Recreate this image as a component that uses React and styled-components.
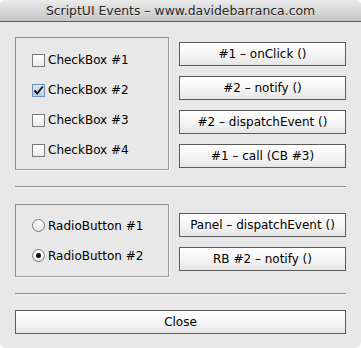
import React from "react";
import styled, { createGlobalStyle } from "styled-components";

const GlobalStyle = createGlobalStyle`
  html, body {
    margin: 0;
    padding: 0;
    background: #ffffff;
  }
  * {
    box-sizing: border-box;
  }
`;

const Window = styled.div`
  width: 361px;
  height: 348px;
  background: #e8e8e8;
  border-radius: 5px 5px 6px 6px;
  overflow: hidden;
  display: flex;
  flex-direction: column;
  font-family: "DejaVu Sans", "Liberation Sans", sans-serif;
  font-size: 12px;
  color: #000;
`;

const TitleBar = styled.div`
  height: 22px;
  flex-shrink: 0;
  background: linear-gradient(#ebebeb, #c4c4c4);
  border-bottom: 1px solid #575757;
  display: flex;
  align-items: center;
  justify-content: center;
  font-size: 12.4px;
  color: #262626;
  text-shadow: 0 1px 0 rgba(255, 255, 255, 0.5);
`;

const Content = styled.div`
  flex: 1;
  display: flex;
  flex-direction: column;
  padding: 15px 15px 0 15px;
`;

const Section = styled.div`
  display: flex;
  gap: 10px;
`;

const Panel = styled.div`
  width: 155px;
  height: ${(p) => p.h}px;
  border: 1px solid #8c8c8c;
  border-bottom-color: #9a9a9a;
  border-right-color: #9a9a9a;
  box-shadow: 1px 1px 0 #f6f6f6;
  display: flex;
  flex-direction: column;
  justify-content: center;
  gap: 16px;
  padding: ${(p) => p.pt || 0}px 0 0 16px;
`;

const ButtonColumn = styled.div`
  display: flex;
  flex-direction: column;
  gap: ${(p) => p.gap}px;
  padding-top: ${(p) => p.top}px;
`;

const Button = styled.div`
  width: ${(p) => p.w || 167}px;
  height: 24px;
  border: 1px solid #5a5a5a;
  background: linear-gradient(#ffffff, #f7f7f7 45%, #e6e6e6);
  display: flex;
  align-items: center;
  justify-content: center;
  color: #000;
`;

const Separator = styled.div`
  height: 1px;
  width: 331px;
  background: #8a8a8a;
  box-shadow: 0 1px 0 #f4f4f4;
  margin: ${(p) => p.m};
`;

const Option = styled.label`
  display: flex;
  align-items: center;
  gap: 3px;
  height: 14px;
`;

const Box = styled.span`
  width: 13px;
  height: 13px;
  flex-shrink: 0;
  border: 1px solid ${(p) => (p.checked ? "#6e8fb8" : "#7a7a7a")};
  background: ${(p) =>
    p.checked
      ? "linear-gradient(#dbe7f5, #b9cde6)"
      : "linear-gradient(#ffffff, #ececec)"};
  display: flex;
  align-items: center;
  justify-content: center;
`;

const Radio = styled.span`
  width: 13px;
  height: 13px;
  flex-shrink: 0;
  border-radius: 50%;
  border: 1px solid #7a7a7a;
  background: linear-gradient(#ffffff, #e4e4e4);
  display: flex;
  align-items: center;
  justify-content: center;

  &::after {
    content: "";
    display: ${(p) => (p.checked ? "block" : "none")};
    width: 5px;
    height: 5px;
    border-radius: 50%;
    background: #111;
  }
`;

function CheckBox({ label, checked }) {
  return (
    <Option>
      <Box checked={checked}>
        {checked && (
          <svg width="11" height="11" viewBox="0 0 11 11">
            <path
              d="M1.5 5.5 L4.2 8.5 L9.8 1.5"
              fill="none"
              stroke="#1a1a1a"
              strokeWidth="2"
            />
          </svg>
        )}
      </Box>
      {label}
    </Option>
  );
}

function RadioButton({ label, checked }) {
  return (
    <Option>
      <Radio checked={checked} />
      {label}
    </Option>
  );
}

export default function App() {
  return (
    <>
      <GlobalStyle />
      <Window>
        <TitleBar>ScriptUI Events – www.davidebarranca.com</TitleBar>
        <Content>
          <Section>
            <Panel h={133} pt={3}>
              <CheckBox label="CheckBox #1" />
              <CheckBox label="CheckBox #2" checked />
              <CheckBox label="CheckBox #3" />
              <CheckBox label="CheckBox #4" />
            </Panel>
            <ButtonColumn gap={10} top={5}>
              <Button>#1 – onClick ()</Button>
              <Button>#2 – notify ()</Button>
              <Button>#2 – dispatchEvent ()</Button>
              <Button>#1 – call (CB #3)</Button>
            </ButtonColumn>
          </Section>
          <Separator m="16px 0 17px 0" />
          <Section>
            <Panel h={73}>
              <RadioButton label="RadioButton #1" />
              <RadioButton label="RadioButton #2" checked />
            </Panel>
            <ButtonColumn gap={10} top={9}>
              <Button>Panel – dispatchEvent ()</Button>
              <Button>RB #2 – notify ()</Button>
            </ButtonColumn>
          </Section>
          <Separator m="16px 0 16px 0" />
          <Button w={331}>Close</Button>
        </Content>
      </Window>
    </>
  );
}
